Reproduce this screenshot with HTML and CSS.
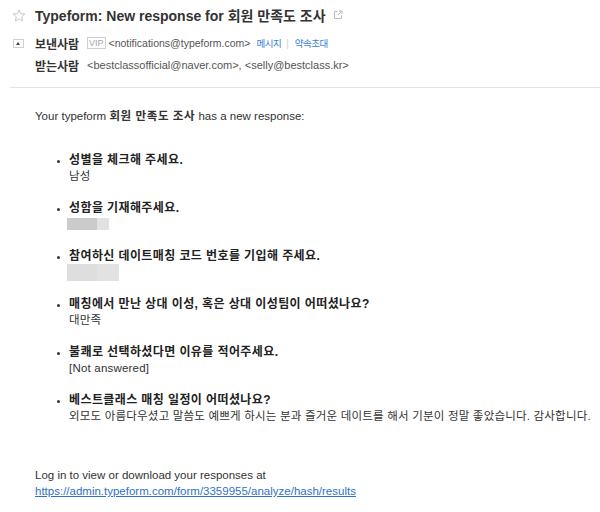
FILE: index.html
```html
<!DOCTYPE html>
<html lang="ko">
<head>
    <meta charset="UTF-8">
    <title>Typeform: New response for 회원 만족도 조사</title>
    <link rel="stylesheet" href="styles.css">
</head>
<body>
    <div class="mail-head">
        <div class="row title-row">
            <span class="lead">
                <svg width="14" height="13" viewBox="0 0 14 13"><path d="M7 0.8 L8.7 4.7 L12.9 5 L9.7 7.8 L10.7 12 L7 9.8 L3.3 12 L4.3 7.8 L1.1 5 L5.3 4.7 Z" fill="none" stroke="#c8c8c8" stroke-width="1"/></svg>
            </span>
            <h1 class="subject">Typeform: New response for 회원 만족도 조사</h1>
            <svg class="popout" width="10" height="10" viewBox="0 0 10 10"><path d="M4.5 1.5 H1.5 V8.5 H8.5 V5.5" fill="none" stroke="#bbb"/><path d="M5 5 L9 1 M6 1 H9 V4" fill="none" stroke="#bbb"/></svg>
        </div>
        <div class="row">
            <span class="lead"><span class="toggle"></span></span>
            <span class="label">보낸사람</span>
            <span class="vip">VIP</span>
            <span class="addr from">&lt;notifications@typeform.com&gt;</span>
            <a class="act" href="#">메시지</a>
            <span class="bar">|</span>
            <a class="act" href="#">약속초대</a>
        </div>
        <div class="row">
            <span class="lead"></span>
            <span class="label">받는사람</span>
            <span class="addr to">&lt;bestclassofficial@naver.com&gt;, &lt;selly@bestclass.kr&gt;</span>
        </div>
    </div>

    <div class="mail-body">
        <p class="intro">Your typeform <b>회원 만족도 조사</b> has a new response:</p>
        <ul class="answers">
            <li>
                <div class="q">성별을 체크해 주세요.</div>
                <div class="a">남성</div>
            </li>
            <li>
                <div class="q">성함을 기재해주세요.</div>
                <div class="a"><span class="blur small"><i></i></span></div>
            </li>
            <li>
                <div class="q">참여하신 데이트매칭 코드 번호를 기입해 주세요.</div>
                <div class="a"><span class="blur big"><i></i></span></div>
            </li>
            <li>
                <div class="q">매칭에서 만난 상대 이성, 혹은 상대 이성팀이 어떠셨나요?</div>
                <div class="a">대만족</div>
            </li>
            <li>
                <div class="q">불쾌로 선택하셨다면 이유를 적어주세요.</div>
                <div class="a">[Not answered]</div>
            </li>
            <li>
                <div class="q">베스트클래스 매칭 일정이 어떠셨나요?</div>
                <div class="a">외모도 아름다우셨고 말씀도 예쁘게 하시는 분과 즐거운 데이트를 해서 기분이 정말 좋았습니다. 감사합니다.</div>
            </li>
        </ul>
        <p class="outro">
            Log in to view or download your responses at<br>
            <a href="#">https://admin.typeform.com/form/3359955/analyze/hash/results</a>
        </p>
    </div>
</body>
</html>
```

FILE: styles.css
```css
body {
    margin: 0;
    background: #ffffff;
    color: #333333;
    font-family: "Liberation Sans", "Noto Sans CJK KR", sans-serif;
    font-size: 12px;
}
.mail-head {
    padding: 5px 0 11px;
    margin-left: 10px;
    border-bottom: 1px solid #e3e3e3;
}
.row {
    display: flex;
    align-items: center;
    height: 22px;
    white-space: nowrap;
}
.title-row {
    height: 20px;
    margin-bottom: 7px;
}
.lead {
    width: 23px;
    flex: none;
    display: flex;
    align-items: center;
    padding-left: 2px;
}
.subject {
    margin: 0;
    font-size: 14px;
    font-weight: bold;
    color: #333333;
}
.popout {
    margin-left: 7px;
}
.toggle {
    position: relative;
    width: 9px;
    height: 7px;
    margin-left: 1px;
    border: 1px solid #cfcfcf;
}
.toggle::after {
    content: "";
    position: absolute;
    left: 2px;
    top: 2px;
    border-left: 2.5px solid transparent;
    border-right: 2.5px solid transparent;
    border-bottom: 3px solid #444444;
}
.label {
    font-weight: bold;
    color: #333333;
    width: 46px;
    margin-right: 6px;
}
.vip {
    font-size: 9px;
    color: #a8a8a8;
    border: 1px solid #d0d0d0;
    padding: 0 1px;
    line-height: 10px;
    margin-right: 3px;
}
.addr {
    font-size: 11px;
    color: #555555;
}
.addr.from {
    font-size: 10.5px;
}
.act {
    font-size: 9.5px;
    letter-spacing: -0.5px;
    color: #3a7fd8;
    text-decoration: none;
    margin-left: 6px;
}
.bar {
    color: #d0d0d0;
    font-size: 10px;
    margin-left: 5px;
}
.mail-body {
    padding-left: 35px;
    padding-right: 6px;
    font-size: 11.5px;
}
.intro {
    margin: 20px 0 28px;
    line-height: 16px;
}
.intro b {
    letter-spacing: 0.6px;
}
.answers {
    margin: 0;
    padding-left: 34px;
    list-style: disc;
}
.answers li {
    margin-bottom: 16px;
    line-height: 16px;
}
.answers li::marker {
    font-size: 9px;
}
.q {
    font-weight: bold;
    font-size: 12px;
    letter-spacing: 0.4px;
    color: #222222;
}
.a {
    color: #333333;
    height: 16px;
    letter-spacing: 0.2px;
    white-space: nowrap;
}
.blur {
    display: inline-block;
    vertical-align: top;
    background: #e2e2e2;
    margin-left: -2px;
}
.blur i {
    display: block;
    height: 100%;
    background: #cbcbcb;
}
.blur.small {
    width: 42px;
    height: 12px;
    margin-top: 2px;
}
.blur.small i {
    width: 30px;
}
.blur.big {
    width: 52px;
    height: 17px;
}
.blur.big i {
    width: 30px;
    background: #dedede;
}
.outro {
    margin: 43px 0 0;
    line-height: 16px;
}
.outro a {
    color: #2f6fc9;
}
```
